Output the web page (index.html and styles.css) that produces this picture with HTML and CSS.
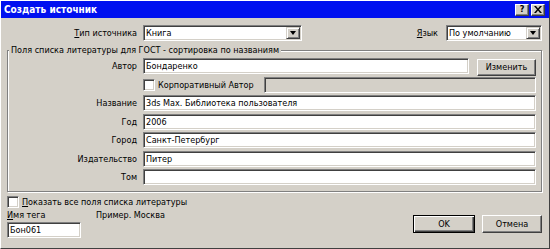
FILE: index.html
```html
<!DOCTYPE html>
<html lang="ru">
<head>
  <meta charset="UTF-8">
  <title>Создать источник</title>
  <link rel="stylesheet" href="styles.css">
</head>
<body>

  <div class="window">
    <div class="titlebar">
      <span class="title">Создать источник</span>
      <div class="caption-btns">
        <span class="cap-btn help">?</span>
        <span class="cap-btn close">
          <svg width="8" height="7" viewBox="0 0 8 7"><path d="M0 0h2l2 2.5L6 0h2L5 3.5 8 7H6L4 4.5 2 7H0l3-3.5z" fill="#000"/></svg>
        </span>
      </div>
    </div>

    <div class="content">
      <div class="top-row">
        <span class="type-label"><u>Т</u>ип источника</span>
        <div class="field combo type-combo">
          <span class="value">Книга</span>
          <span class="drop-btn"><i class="arrow"></i></span>
        </div>
        <span class="lang-label"><u>Я</u>зык</span>
        <div class="field combo lang-combo">
          <span class="value">По умолчанию</span>
          <span class="drop-btn"><i class="arrow"></i></span>
        </div>
      </div>

      <fieldset class="group">
        <legend>Поля списка литературы для ГОСТ - сортировка по названиям</legend>
        <div class="rows">
          <span class="lbl">Автор</span>
          <div class="author-row">
            <div class="field">Бондаренко</div>
            <span class="btn edit-btn">Изменить</span>
          </div>

          <span class="lbl"></span>
          <div class="corp-row">
            <span class="check"></span>
            <span class="corp-label">Корпоративный Автор</span>
            <div class="field disabled"></div>
          </div>

          <span class="lbl">Название</span>
          <div class="field">3ds Max. Библиотека пользователя</div>

          <span class="lbl">Год</span>
          <div class="field">2006</div>

          <span class="lbl">Город</span>
          <div class="field">Санкт-Петербург</div>

          <span class="lbl">Издательство</span>
          <div class="field">Питер</div>

          <span class="lbl">Том</span>
          <div class="field"></div>
        </div>
      </fieldset>

      <div class="bottom">
        <div class="bottom-left">
          <div class="show-all">
            <span class="check"></span>
            <span><u>П</u>оказать все поля списка литературы</span>
          </div>
          <div class="tag-labels">
            <span class="tag-label"><u>И</u>мя тега</span>
            <span>Пример. Москва</span>
          </div>
          <div class="field tag-field">Бон061</div>
        </div>
        <div class="actions">
          <span class="btn default">OK</span>
          <span class="btn">Отмена</span>
        </div>
      </div>
    </div>
  </div>

</body>
</html>
```

FILE: styles.css
```css
body {
  margin: 0;
  font-family: 'DejaVu Sans Condensed', 'Liberation Sans', Arial, sans-serif;
  font-size: 9px;
  color: #000;
  background: #d4d0c8;
}

.window {
  width: 550px;
  height: 249px;
  box-sizing: border-box;
  background: #d4d0c8;
  border: 1px solid;
  border-color: #fff #404040 #404040 #fff;
}

.titlebar {
  height: 17px;
  background: #0010f0;
  display: flex;
  align-items: center;
  padding: 0 4px 0 3px;
}

.title {
  color: #fff;
  font-weight: bold;
  font-size: 10px;
  flex: 1;
}

.caption-btns {
  display: flex;
  gap: 2px;
}

.cap-btn {
  width: 14px;
  height: 12px;
  box-sizing: border-box;
  background: #d4d0c8;
  border: 1px solid;
  border-color: #fff #404040 #404040 #fff;
  box-shadow: inset -1px -1px #808080;
  display: flex;
  align-items: center;
  justify-content: center;
  font-weight: bold;
  font-size: 9px;
  line-height: 1;
}

.content {
  padding: 7px 7px 0 6px;
}

/* common sunken field */
.field {
  height: 16px;
  box-sizing: border-box;
  background: #fff;
  border: 1px solid;
  border-color: #808080 #fff #fff #808080;
  box-shadow: inset 1px 1px #404040, inset -1px -1px #d4d0c8;
  padding: 0 2px;
  line-height: 14px;
  white-space: nowrap;
  overflow: hidden;
}

.field.disabled {
  background: #d4d0c8;
}

.top-row {
  display: flex;
  align-items: center;
  height: 16px;
}

.type-label {
  width: 130px;
  text-align: right;
  margin-right: 6px;
}

.combo {
  display: flex;
  align-items: center;
  padding: 0 2px 0 2px;
}

.combo .value {
  flex: 1;
}

.type-combo {
  width: 159px;
}

.lang-label {
  margin-left: auto;
  margin-right: 8px;
}

.lang-combo {
  width: 96px;
}

.drop-btn {
  width: 14px;
  height: 12px;
  box-sizing: border-box;
  background: #d4d0c8;
  border: 1px solid;
  border-color: #d4d0c8 #404040 #404040 #d4d0c8;
  box-shadow: inset 1px 1px #fff, inset -1px -1px #808080;
  display: flex;
  align-items: center;
  justify-content: center;
  margin-right: -1px;
}

.arrow {
  width: 0;
  height: 0;
  border-left: 3.5px solid transparent;
  border-right: 3.5px solid transparent;
  border-top: 4px solid #000;
}

.group {
  margin: 3px 0 0 0;
  padding: 2px 5px 6px 0;
  border: 1px solid #808080;
  box-shadow: 1px 1px #fff, inset 1px 1px #fff;
}

.group legend {
  margin-left: 1px;
  padding: 0 2px;
  line-height: 12px;
  background: #d4d0c8;
}

.rows {
  display: grid;
  grid-template-columns: 129px 1fr;
  grid-auto-rows: 16px;
  column-gap: 6px;
  row-gap: 2.5px;
  align-items: center;
}

.lbl {
  text-align: right;
}

.author-row {
  display: flex;
  gap: 8px;
  align-items: center;
}

.author-row .field {
  flex: 1;
}

.edit-btn {
  width: 59px;
  height: 17px;
  margin-top: 2px;
}

.btn {
  box-sizing: border-box;
  display: flex;
  align-items: center;
  justify-content: center;
  background: #d4d0c8;
  border: 1px solid;
  border-color: #fff #404040 #404040 #fff;
  box-shadow: inset -1px -1px #808080;
}

.btn.default {
  border-color: #000;
  box-shadow: inset 1px 1px #fff, inset -1px -1px #404040, inset -2px -2px #808080;
}

.corp-row {
  display: flex;
  align-items: center;
}

.check {
  width: 12px;
  height: 12px;
  box-sizing: border-box;
  background: #fff;
  border: 1px solid;
  border-color: #808080 #fff #fff #808080;
  box-shadow: inset 1px 1px #404040, inset -1px -1px #d4d0c8;
}

.corp-label {
  margin-left: 3px;
  margin-right: 10px;
  white-space: nowrap;
}

.corp-row .field {
  flex: 1;
}

.bottom {
  display: flex;
  margin-top: 3px;
}

.show-all {
  display: flex;
  align-items: center;
  gap: 3px;
  height: 13px;
}

.tag-labels {
  display: flex;
  margin-top: 1px;
  height: 12px;
  line-height: 12px;
}

.tag-label {
  width: 89px;
}

.tag-field {
  width: 74px;
  margin-top: 1px;
}

.actions {
  margin-left: auto;
  display: flex;
  gap: 7px;
  margin-top: 20px;
}

.actions .btn {
  width: 62px;
  height: 18px;
}

.actions .btn + .btn {
  width: 60px;
}
```
